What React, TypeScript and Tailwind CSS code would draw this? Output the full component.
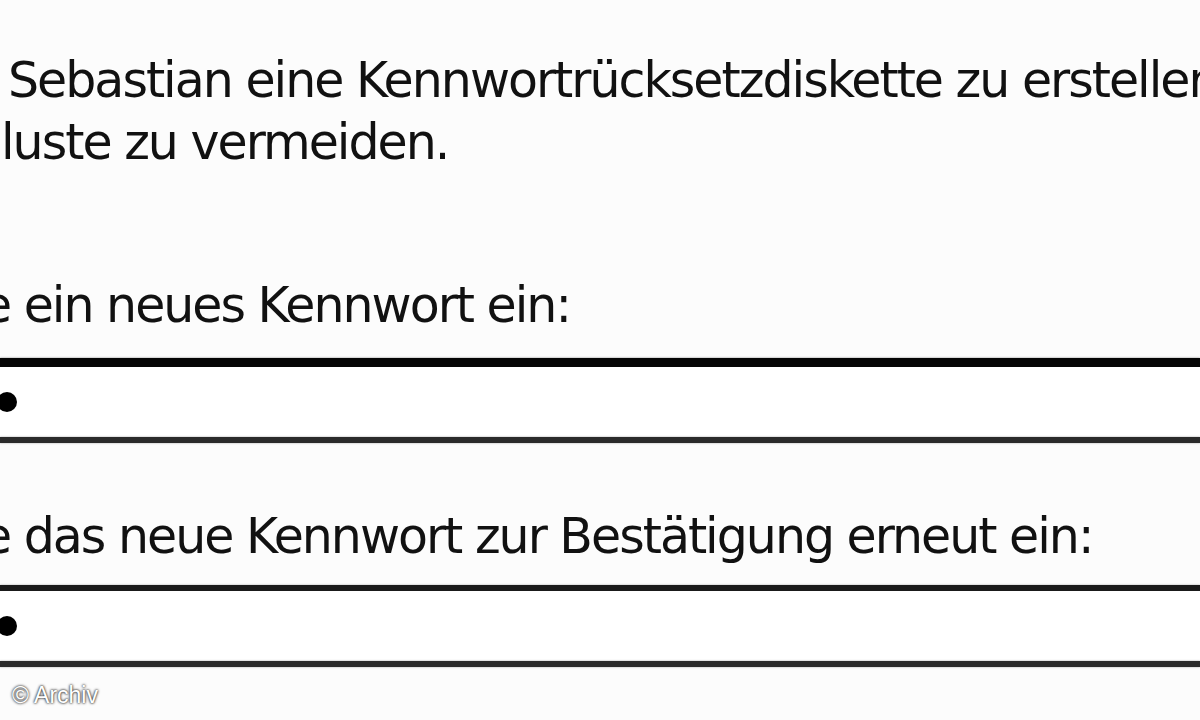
import React from 'react';

const PasswordField: React.FC<{ topThick?: boolean }> = ({ topThick }) => (
  <div className="flex flex-col">
    <div
      className={
        topThick
          ? 'h-[9px] bg-[#050505] shadow-[0_0_2px_#888]'
          : 'h-[6px] bg-[#1a1a1a] shadow-[0_0_2px_#999]'
      }
    />
    <div className="flex h-[70px] items-center bg-white">
      <div className="ml-[-3px] h-[20px] w-[20px] rounded-full bg-black" />
    </div>
    <div className="h-[6px] bg-[#2b2b2b] shadow-[0_0_2px_#999]" />
  </div>
);

export default function App() {
  return (
    <div className="relative h-[720px] w-[1200px] overflow-hidden bg-[#fcfcfc] font-['DejaVu_Sans',sans-serif] text-[49px] tracking-[-2px] text-[#111]">
      <div className="flex flex-col pt-[50px]">
        <div className="h-[62px] whitespace-nowrap pl-[8px] leading-[62px]">
          Sebastian eine Kennwortrücksetzdiskette zu erstellen, um
        </div>
        <div className="h-[62px] whitespace-nowrap pl-[1px] leading-[62px]">
          luste zu vermeiden.
        </div>
        <div className="mt-[101px] h-[62px] whitespace-nowrap leading-[62px]">
          <span className="ml-[-18px]">e ein neues Kennwort ein:</span>
        </div>
        <div className="mt-[21px]">
          <PasswordField topThick />
        </div>
        <div className="mt-[63px] h-[62px] whitespace-nowrap leading-[62px]">
          <span className="ml-[-18px]">e das neue Kennwort zur Bestätigung erneut ein:</span>
        </div>
        <div className="mt-[17px]">
          <PasswordField />
        </div>
      </div>
      <div className="absolute bottom-[13px] left-[12px] font-['Liberation_Sans',sans-serif] text-[23px] leading-none tracking-normal text-white [text-shadow:0_0_3px_#222,0_0_2px_#444]">
        © Archiv
      </div>
    </div>
  );
}
